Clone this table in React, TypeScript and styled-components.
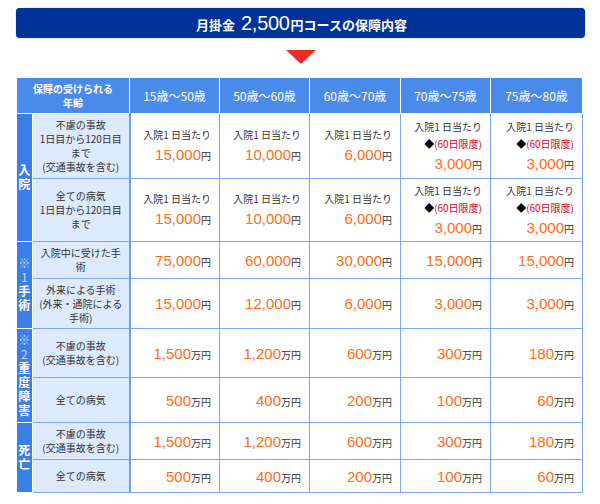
import React from "react";
import styled, { createGlobalStyle } from "styled-components";

const Global = createGlobalStyle`
  html, body { margin: 0; padding: 0; background: #fff; }
  body { font-family: "Noto Sans CJK JP", "Noto Sans", sans-serif; color: #333; }
`;

const Page = styled.div`
  width: 600px;
  padding: 8px 0 0 16px;
  box-sizing: border-box;
`;

const TitleBar = styled.div`
  width: 569px;
  height: 30px;
  background: #003399;
  border-radius: 4px;
  box-shadow: 0 0 1px 0 #3a64c0;
  display: flex;
  align-items: center;
  justify-content: center;
  color: #fff;
`;

const TitleText = styled.div`
  display: flex;
  align-items: baseline;
  font-weight: bold;
  font-size: 13px;
  padding-left: 2px;
`;

const TitleAmount = styled.span`
  font-family: "Liberation Sans", Arial, sans-serif;
  font-weight: normal;
  font-size: 20px;
  margin: 0 1px 0 6px;
  letter-spacing: -0.3px;
`;

const ArrowRow = styled.div`
  width: 569px;
  display: flex;
  justify-content: center;
  padding: 12px 0 13px;
`;

const Arrow = styled.div`
  width: 0;
  height: 0;
  border-left: 15px solid transparent;
  border-right: 15px solid transparent;
  border-top: 14px solid #ee2b24;
  margin-left: 1px;
`;

const Table = styled.table`
  border-collapse: collapse;
  table-layout: fixed;
  width: 566px;
`;

const Col = styled.col<{ $w: number }>`
  width: ${(p) => p.$w}px;
`;

const Row = styled.tr<{ $h: number }>`
  height: ${(p) => p.$h}px;
`;

const HeadCell = styled.th<{ $first?: boolean }>`
  background: #4a8ae8;
  color: #fff;
  border: 1px solid #fff;
  text-align: center;
  vertical-align: middle;
  padding: 0;
  font-size: ${(p) => (p.$first ? "10px" : "12px")};
  font-weight: ${(p) => (p.$first ? "bold" : "normal")};
  line-height: 14px;
`;

const CatCell = styled.td`
  background: #3b7ee6;
  border: 1px solid #fff;
  border-left: none;
  padding: 0;
  vertical-align: middle;
  text-align: center;
`;

const CatText = styled.div`
  writing-mode: vertical-rl;
  text-orientation: upright;
  margin: 0 auto;
  font-size: 12px;
  font-weight: bold;
  line-height: 15px;
  letter-spacing: 2px;
  color: #fff;
  white-space: nowrap;
`;

const CatNote = styled.span`
  color: #c7dafa;
  font-weight: normal;
`;

const LabelCell = styled.td`
  background: #dde9fc;
  border: 1px solid #7aa8ee;
  border-right: 2px solid #6a9eee;
  padding: 0;
  text-align: center;
  vertical-align: middle;
  font-size: 10px;
  line-height: 14px;
  color: #333;
  white-space: nowrap;
`;

const DataCell = styled.td`
  background: #fff;
  border: 1px solid #7aa8ee;
  padding: 0 8px 0 0;
  text-align: right;
  vertical-align: middle;
  white-space: nowrap;
`;

const Small = styled.div`
  font-size: 10px;
  line-height: 17px;
  color: #333;
`;

const Limit = styled.span`
  color: #e60012;
`;

const Diamond = styled.span`
  color: #000;
  font-size: 10px;
`;

const AmountLine = styled.div`
  line-height: 20px;
`;

const Num = styled.span`
  font-family: "Liberation Sans", Arial, sans-serif;
  font-size: 15px;
  color: #ff6b17;
`;

const Unit = styled.span`
  font-size: 10px;
  color: #333;
`;

type Pre = "none" | "daily" | "limited";
type Cell = { num: string; unit: string; pre: Pre };

const d = (num: string): Cell => ({ num, unit: "円", pre: "daily" });
const l = (num: string): Cell => ({ num, unit: "円", pre: "limited" });
const y = (num: string): Cell => ({ num, unit: "円", pre: "none" });
const m = (num: string): Cell => ({ num, unit: "万円", pre: "none" });

type Cat = { note?: string; text: string; span: number };
type RowData = { cat?: Cat; label: string[]; h: number; cells: Cell[] };

const rows: RowData[] = [
  {
    cat: { text: "入院", span: 2 },
    label: ["不慮の事故", "1日目から120日目", "まで", "(交通事故を含む)"],
    h: 65,
    cells: [d("15,000"), d("10,000"), d("6,000"), l("3,000"), l("3,000")],
  },
  {
    label: ["全ての病気", "1日目から120日目", "まで"],
    h: 63,
    cells: [d("15,000"), d("10,000"), d("6,000"), l("3,000"), l("3,000")],
  },
  {
    cat: { note: "※1", text: "手術", span: 2 },
    label: ["入院中に受けた手", "術"],
    h: 37,
    cells: [y("75,000"), y("60,000"), y("30,000"), y("15,000"), y("15,000")],
  },
  {
    label: ["外来による手術", "(外来・通院による", "手術)"],
    h: 50,
    cells: [y("15,000"), y("12,000"), y("6,000"), y("3,000"), y("3,000")],
  },
  {
    cat: { note: "※2", text: "重度障害", span: 2 },
    label: ["不慮の事故", "(交通事故を含む)"],
    h: 49,
    cells: [m("1,500"), m("1,200"), m("600"), m("300"), m("180")],
  },
  {
    label: ["全ての病気"],
    h: 45,
    cells: [m("500"), m("400"), m("200"), m("100"), m("60")],
  },
  {
    cat: { text: "死亡", span: 2 },
    label: ["不慮の事故", "(交通事故を含む)"],
    h: 37,
    cells: [m("1,500"), m("1,200"), m("600"), m("300"), m("180")],
  },
  {
    label: ["全ての病気"],
    h: 33,
    cells: [m("500"), m("400"), m("200"), m("100"), m("60")],
  },
];

const ages = ["15歳～50歳", "50歳～60歳", "60歳～70歳", "70歳～75歳", "75歳～80歳"];
const widths = [16, 97, 90, 90, 91, 90, 92];

function Amount({ c }: { c: Cell }) {
  return (
    <>
      {c.pre !== "none" && <Small>入院1 日当たり</Small>}
      {c.pre === "limited" && (
        <Small>
          <Diamond>◆</Diamond>
          <Limit>(60日限度)</Limit>
        </Small>
      )}
      <AmountLine>
        <Num>{c.num}</Num>
        <Unit>{c.unit}</Unit>
      </AmountLine>
    </>
  );
}

export default function App() {
  return (
    <>
      <Global />
      <Page>
        <TitleBar>
          <TitleText>
            月掛金<TitleAmount>2,500</TitleAmount>円コースの保障内容
          </TitleText>
        </TitleBar>
        <ArrowRow>
          <Arrow />
        </ArrowRow>
        <Table>
          <colgroup>
            {widths.map((w, i) => (
              <Col key={i} $w={w} />
            ))}
          </colgroup>
          <thead>
            <Row $h={36}>
              <HeadCell $first colSpan={2}>
                保障の受けられる
                <br />
                年齢
              </HeadCell>
              {ages.map((a) => (
                <HeadCell key={a}>{a}</HeadCell>
              ))}
            </Row>
          </thead>
          <tbody>
            {rows.map((r, i) => (
              <Row key={i} $h={r.h}>
                {r.cat && (
                  <CatCell rowSpan={r.cat.span}>
                    <CatText>
                      {r.cat.note && <CatNote>{r.cat.note}</CatNote>}
                      {r.cat.text}
                    </CatText>
                  </CatCell>
                )}
                <LabelCell>
                  {r.label.map((t, j) => (
                    <React.Fragment key={j}>
                      {j > 0 && <br />}
                      {t}
                    </React.Fragment>
                  ))}
                </LabelCell>
                {r.cells.map((c, j) => (
                  <DataCell key={j}>
                    <Amount c={c} />
                  </DataCell>
                ))}
              </Row>
            ))}
          </tbody>
        </Table>
      </Page>
    </>
  );
}
